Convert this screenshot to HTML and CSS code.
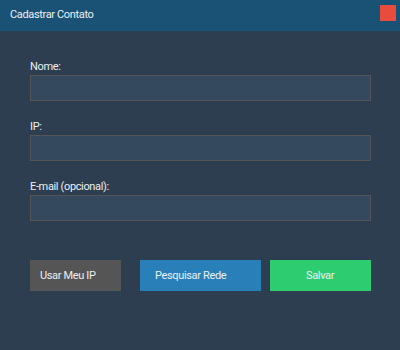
FILE: index.html
```html
<!DOCTYPE html>
<html lang="pt">
<head>
  <meta charset="UTF-8">
  <title>Cadastrar Contato</title>
  <link rel="stylesheet" href="styles.css">
</head>
<body>

  <div class="titlebar">
    <span class="title">Cadastrar Contato</span>
    <span class="close"></span>
  </div>

  <div class="form">
    <div class="field">
      <label>Nome:</label>
      <input type="text" />
    </div>
    <div class="field">
      <label>IP:</label>
      <input type="text" />
    </div>
    <div class="field">
      <label>E-mail (opcional):</label>
      <input type="text" />
    </div>

    <div class="buttons">
      <button class="btn btn-gray">Usar Meu IP</button>
      <button class="btn btn-blue">Pesquisar Rede</button>
      <button class="btn btn-green">Salvar</button>
    </div>
  </div>

</body>
</html>
```

FILE: styles.css
```css
body {
  margin: 0;
  width: 400px;
  height: 350px;
  background: #2c3e50;
  font-family: Roboto, "Liberation Sans", sans-serif;
  color: #ecf0f1;
}

.titlebar {
  height: 31px;
  background: #1a5276;
  display: flex;
  align-items: center;
  justify-content: space-between;
  padding: 0 4px 0 10px;
}

.title {
  font-size: 11px;
  letter-spacing: -0.35px;
  color: #ecf0f1;
  margin-top: -3px;
}

.close {
  width: 16px;
  height: 16px;
  background: #e74c3c;
  margin-top: -5px;
}

.form {
  padding: 29px 29px 0 30px;
}

.field {
  display: flex;
  flex-direction: column;
  margin-bottom: 19px;
}

.field label {
  font-size: 11px;
  letter-spacing: -0.35px;
  height: 15px;
  line-height: 13px;
}

.field input {
  height: 26px;
  box-sizing: border-box;
  margin: 0;
  background: #34495e;
  border: 1px solid #555;
  color: #ecf0f1;
  outline: none;
}

.buttons {
  display: flex;
  margin-top: 39px;
}

.btn {
  height: 31px;
  border: none;
  color: #ecf0f1;
  font-family: inherit;
  font-size: 11px;
  letter-spacing: -0.35px;
  text-align: left;
  padding: 0;
  cursor: pointer;
}

.btn-gray {
  width: 91px;
  background: #555;
  padding-left: 10px;
}

.btn-blue {
  width: 121px;
  background: #2980b9;
  padding-left: 15px;
  margin-left: 19px;
}

.btn-green {
  width: 101px;
  background: #2ecc71;
  padding-left: 36px;
  margin-left: 9px;
}
```
